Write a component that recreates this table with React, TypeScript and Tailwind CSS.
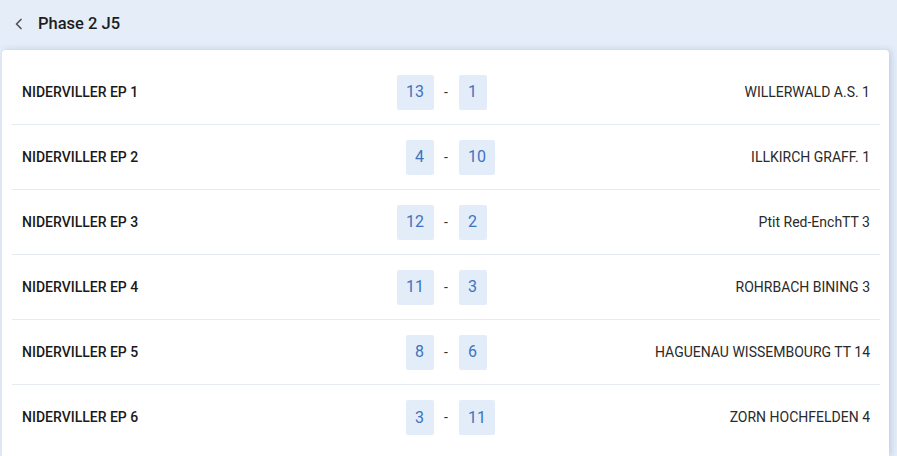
import React from "react";

const rows: [string, string, string, string][] = [
  ["NIDERVILLER EP 1", "13", "1", "WILLERWALD A.S. 1"],
  ["NIDERVILLER EP 2", "4", "10", "ILLKIRCH GRAFF. 1"],
  ["NIDERVILLER EP 3", "12", "2", "Ptit Red-EnchTT 3"],
  ["NIDERVILLER EP 4", "11", "3", "ROHRBACH BINING 3"],
  ["NIDERVILLER EP 5", "8", "6", "HAGUENAU WISSEMBOURG TT 14"],
  ["NIDERVILLER EP 6", "3", "11", "ZORN HOCHFELDEN 4"],
];

export default function App() {
  return (
    <div
      className="w-[897px] h-[456px] overflow-hidden bg-[#e4edf8] flex flex-col"
      style={{ fontFamily: "Roboto, 'Liberation Sans', sans-serif" }}
    >
      <div className="h-[50px] shrink-0 flex items-center pl-[13px] pb-[2px]">
        <svg width="12" height="14" viewBox="0 0 12 14" fill="none" className="text-[#555]">
          <path d="M8 2.5 L3.5 7 L8 11.5" stroke="currentColor" strokeWidth="1.7" strokeLinecap="round" strokeLinejoin="round" />
        </svg>
        <span className="ml-[13px] text-[16.5px] font-medium text-[#1d1d1d]">Phase 2 J5</span>
      </div>
      <div className="flex pl-[2px] pr-[8px] flex-1 min-h-0">
        <div className="flex-1 bg-white rounded-t-[4px] shadow-[2px_0_6px_rgba(120,145,185,0.35)] px-[10px] pt-[10px] pr-[9px]">
          {rows.map(([home, s1, s2, away], i) => (
            <div
              key={i}
              className={
                i < rows.length - 1
                  ? "h-[65px] grid grid-cols-[1fr_auto_1fr] items-center px-[10px] border-b border-[#e6ebf2]"
                  : "h-[65px] grid grid-cols-[1fr_auto_1fr] items-center px-[10px]"
              }
            >
              <div className="text-[14px] font-medium text-[#1a1a1a]">{home}</div>
              <div className="flex items-center">
                <div className="w-[60px] flex justify-end">
                  <span className="h-[35px] flex items-center px-[9.5px] bg-[#e3edf9] rounded-[2px] text-[16px] text-[#3e73bd]">{s1}</span>
                </div>
                <span className="w-[25px] text-center text-[14px] text-[#333]">-</span>
                <div className="w-[60px] flex justify-start">
                  <span className="h-[35px] flex items-center px-[9.5px] bg-[#e3edf9] rounded-[2px] text-[16px] text-[#3e73bd]">{s2}</span>
                </div>
              </div>
              <div className="text-[14px] text-[#2a2a2a] text-right">{away}</div>
            </div>
          ))}
        </div>
      </div>
    </div>
  );
}
